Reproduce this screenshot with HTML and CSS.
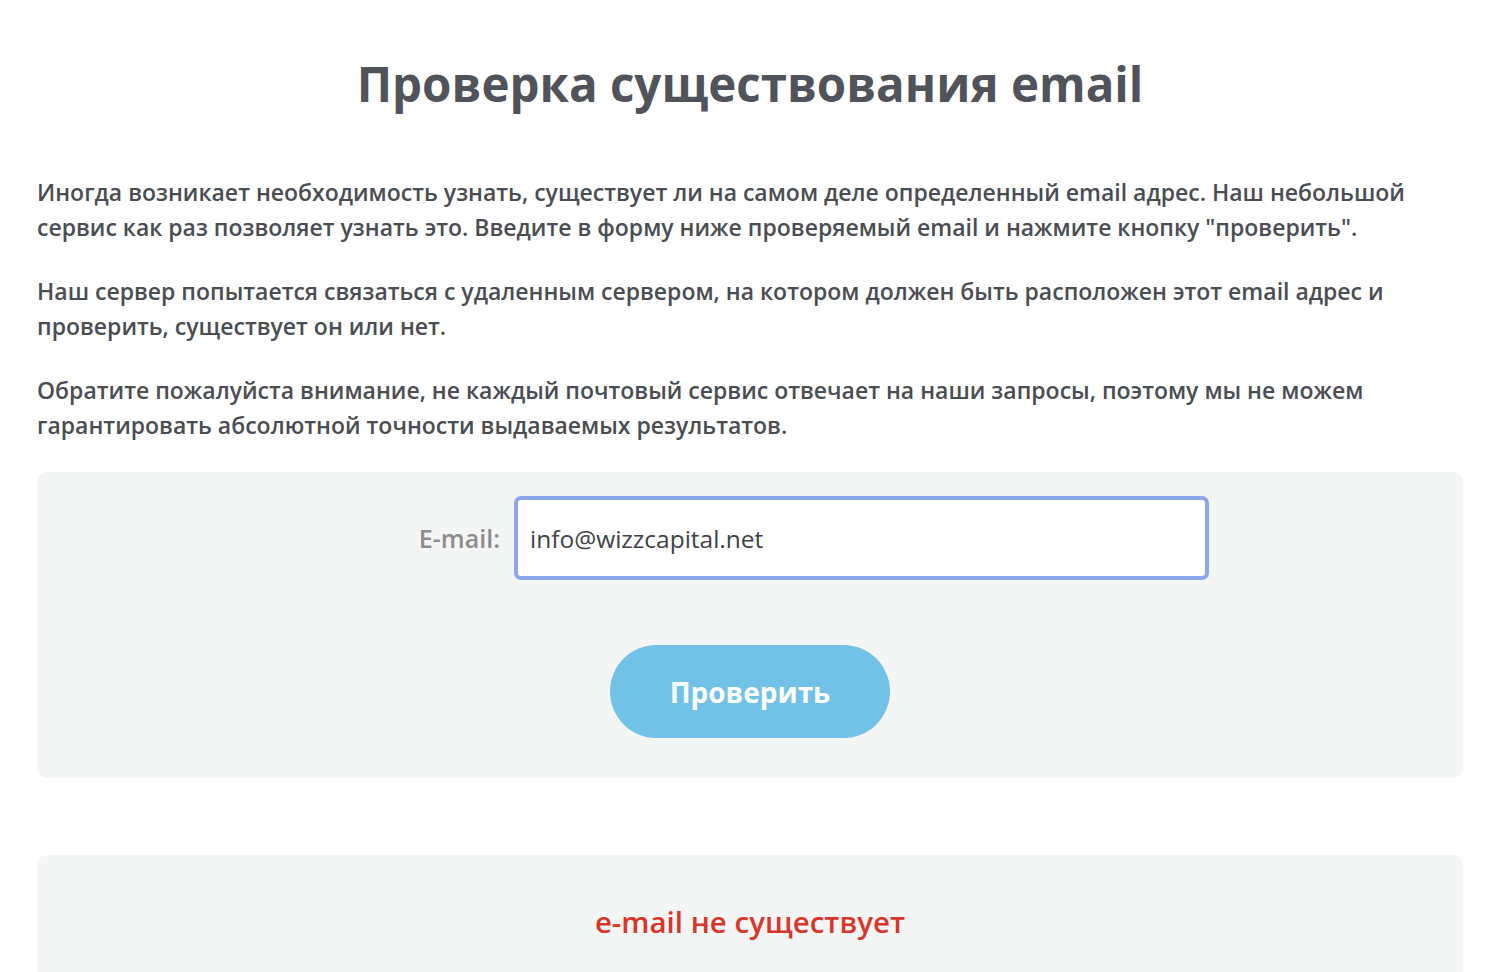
FILE: index.html
```html
<!DOCTYPE html>
<html lang="ru">
<head>
  <meta charset="UTF-8">
  <title>Проверка существования email</title>
  <link rel="stylesheet" href="styles.css">
</head>
<body>
  <div class="page">
    <h1 class="title">Проверка существования email</h1>

    <div class="intro">
      <p>Иногда возникает необходимость узнать, существует ли на самом деле определенный email адрес. Наш небольшой сервис как раз позволяет узнать это. Введите в форму ниже проверяемый email и нажмите кнопку "проверить".</p>
      <p>Наш сервер попытается связаться с удаленным сервером, на котором должен быть расположен этот email адрес и проверить, существует он или нет.</p>
      <p>Обратите пожалуйста внимание, не каждый почтовый сервис отвечает на наши запросы, поэтому мы не можем гарантировать абсолютной точности выдаваемых результатов.</p>
    </div>

    <form class="panel check-form">
      <div class="field">
        <label class="field-label" for="email">E-mail:</label>
        <input class="field-input" id="email" type="text" value="info@wizzcapital.net">
      </div>
      <button class="check-btn" type="button">Проверить</button>
    </form>

    <div class="panel result">
      <p class="result-text">e-mail не существует</p>
    </div>
  </div>
</body>
</html>
```

FILE: styles.css
```css
body {
  margin: 0;
  background: #fff;
  font-family: "Open Sans", Arial, sans-serif;
  color: #4a4d52;
}

.page {
  width: 1426px;
  margin: 0 auto;
}

.title {
  margin: 0;
  padding-top: 54px;
  text-align: center;
  font-size: 47.5px;
  font-weight: 700;
  line-height: 60px;
  color: #50545a;
}

.intro {
  padding-top: 61px;
}

.intro p {
  margin: 0 0 30px;
  font-size: 23px;
  font-weight: 600;
  line-height: 34.5px;
}

.panel {
  background: #f4f5f5;
  border-radius: 10px;
}

.check-form {
  padding: 24px 0 40px;
  display: flex;
  flex-direction: column;
  align-items: center;
}

.field {
  align-self: stretch;
  display: flex;
  align-items: center;
  gap: 14px;
}

.field-label {
  width: 463px;
  text-align: right;
  font-size: 25px;
  font-weight: 600;
  color: #8c8d8f;
}

.field-input {
  width: 663px;
  height: 76px;
  box-sizing: content-box;
  padding: 0 12px;
  border: 4px solid #8ea7ec;
  border-radius: 7px;
  background: #fff;
  font-family: inherit;
  font-size: 24.5px;
  color: #3f4246;
  outline: none;
}

.check-btn {
  margin-top: 65px;
  width: 280px;
  height: 93px;
  border: none;
  border-radius: 47px;
  background: #71c2e6;
  color: #fff;
  font-family: inherit;
  font-size: 28px;
  font-weight: 700;
  cursor: pointer;
}

.result {
  margin-top: 77px;
  height: 160px;
  padding-top: 46px;
  box-sizing: border-box;
}

.result-text {
  margin: 0;
  text-align: center;
  font-size: 29.5px;
  font-weight: 600;
  color: #d8362b;
}
```
